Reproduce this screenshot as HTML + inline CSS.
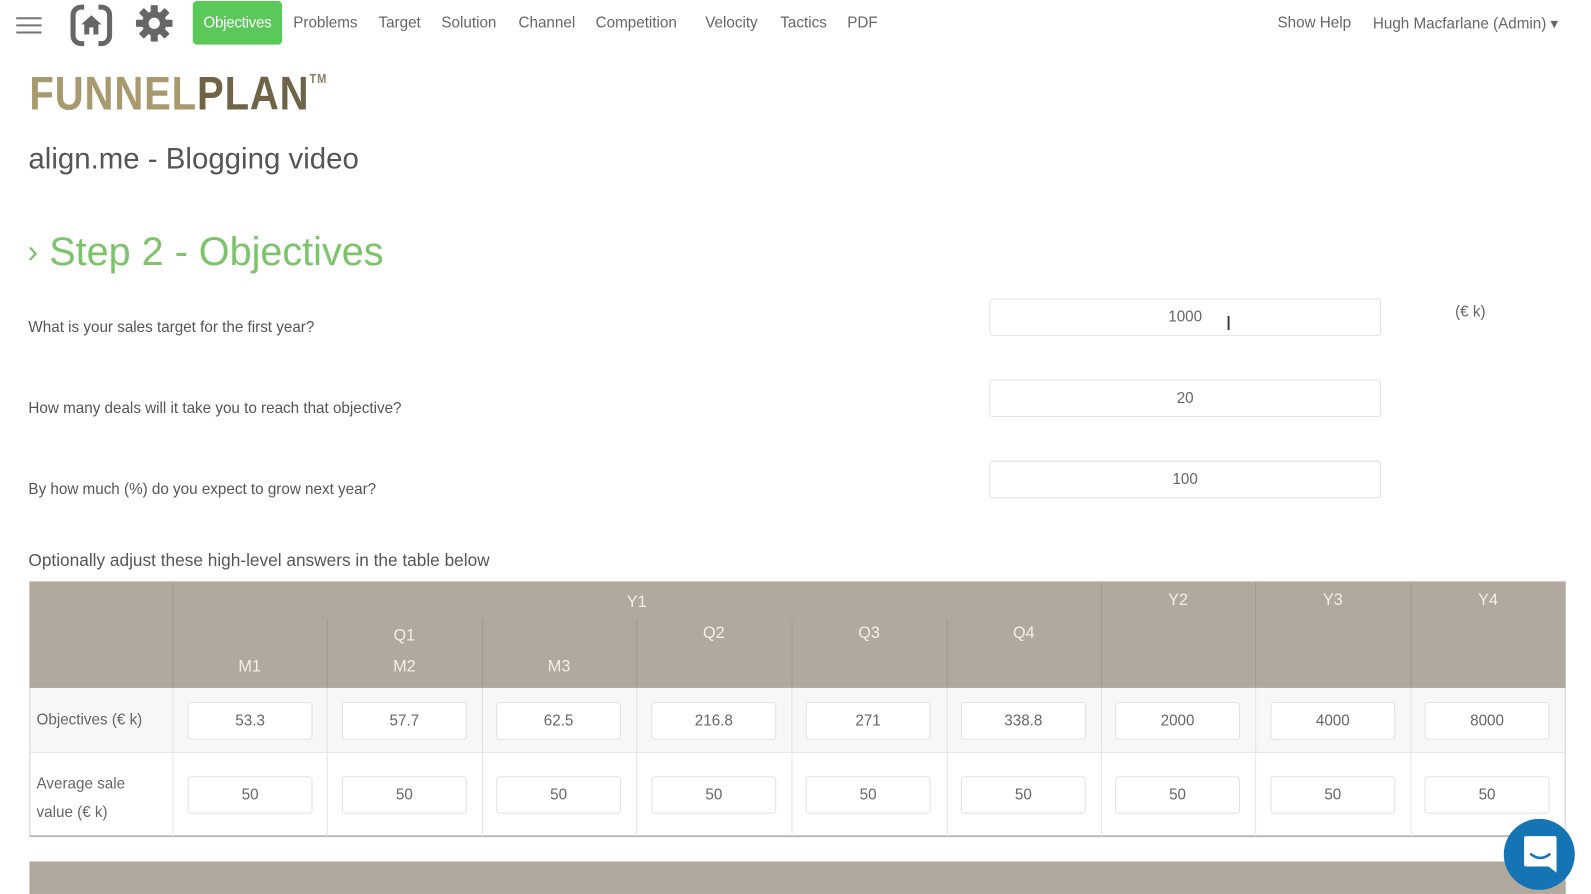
<!DOCTYPE html>
<html><head><meta charset="utf-8"><style>
*{margin:0;padding:0;box-sizing:border-box}
body{width:1591px;height:881px;overflow:hidden;background:#fff;font-family:"Liberation Sans",sans-serif;color:#555;position:relative}
#w{position:absolute;left:0;top:0;width:1568px;height:869px;transform:scale(1.0147);transform-origin:0 0}
.a{position:absolute;white-space:nowrap}
.nav{font-size:15px;color:#666;top:14px}
.inp{position:absolute;border:1px solid #e2e2e2;border-radius:3px;background:#fff;text-align:center;font-size:15px;color:#666}
.h{position:absolute;color:#f3efe6;font-size:16px;text-align:center}
.v{position:absolute;width:1px;background:#a39a8d}
.vr{position:absolute;width:1px;background:#e3e3e3}
</style></head><body><div id="w">
<div class="a" style="left:16px;top:17px;width:25px;height:2px;background:#777;box-shadow:0 7px 0 #777,0 14px 0 #777"></div>
<svg class="a" style="left:69px;top:4px" width="42" height="42" viewBox="0 0 42 42"><rect x="3" y="3" width="36" height="36" rx="8" fill="none" stroke="#666" stroke-width="5"/><rect x="14" y="0" width="14" height="6" fill="#fff"/><rect x="14" y="36" width="14" height="6" fill="#fff"/><path d="M21 11 L11 20 H14 V30 H28 V20 H31 Z" fill="#666"/><rect x="19" y="23" width="4" height="7" fill="#fff"/></svg>
<svg class="a" style="left:133px;top:4px" width="38" height="38" viewBox="0 0 38 38"><g fill="#666"><circle cx="19" cy="19" r="12"/><g id="t"><rect x="15.5" y="1" width="7" height="36" rx="1"/></g><use href="#t" transform="rotate(45 19 19)"/><use href="#t" transform="rotate(90 19 19)"/><use href="#t" transform="rotate(135 19 19)"/></g><circle cx="19" cy="19" r="5.5" fill="#fff"/></svg>
<div class="a" style="left:190px;top:1px;width:88px;height:43px;background:#5bc85a;border-radius:4px;color:#fff;font-size:15px;line-height:43px;text-align:center;letter-spacing:-0.3px">Objectives</div>
<div class="a nav" style="left:289px">Problems</div>
<div class="a nav" style="left:373px">Target</div>
<div class="a nav" style="left:435px">Solution</div>
<div class="a nav" style="left:511px">Channel</div>
<div class="a nav" style="left:587px">Competition</div>
<div class="a nav" style="left:695px">Velocity</div>
<div class="a nav" style="left:769px">Tactics</div>
<div class="a nav" style="left:835px">PDF</div>
<div class="a nav" style="left:1259px">Show Help</div>
<div class="a nav" style="left:1353px">Hugh Macfarlane (Admin) ▾</div>
<div class="a" style="left:29px;top:64px;font-size:47px;font-weight:bold;letter-spacing:1px;color:#a89a6e;transform:scaleX(0.84);transform-origin:left">FUNNEL<span style="color:#706448">PLAN</span><sup style="font-size:13px;vertical-align:top;position:relative;top:6px;color:#8a7f62">TM</sup></div>
<div class="a" style="left:28px;top:141px;font-size:29px;color:#555">align.me - Blogging video</div>
<div class="a" style="left:27px;top:227px;font-size:39px;color:#7cc46a"><span style="font-size:32px;position:relative;top:-3px">&#x203A;</span> Step 2 - Objectives</div>
<div class="a" style="left:28px;top:314px;font-size:15px">What is your sales target for the first year?</div>
<div class="a" style="left:28px;top:394px;font-size:15px">How many deals will it take you to reach that objective?</div>
<div class="a" style="left:28px;top:474px;font-size:15px">By how much (%) do you expect to grow next year?</div>
<div class="inp" style="left:975px;top:294px;width:386px;height:37px;line-height:35px">1000</div>
<div class="inp" style="left:975px;top:374px;width:386px;height:37px;line-height:35px">20</div>
<div class="inp" style="left:975px;top:454px;width:386px;height:37px;line-height:35px">100</div>
<div class="a" style="left:1208px;top:308px;font-size:20px;color:#333">I</div>
<div class="a" style="left:1434px;top:299px;font-size:15px;color:#666">(€ k)</div>
<div class="a" style="left:28px;top:543px;font-size:17px">Optionally adjust these high-level answers in the table below</div>
<div class="a" style="left:29px;top:573px;width:1514px;height:252px;border:1px solid #ccc;border-top:none"></div>
<div class="a" style="left:29px;top:573px;width:1514px;height:105px;background:#b1a99d"></div>
<div class="a" style="left:30px;top:678px;width:1512px;height:64px;background:#f7f7f7;border-bottom:1px solid #e3e3e3"></div>
<div class="a" style="left:29px;top:823px;width:1514px;height:2px;background:#bbb"></div>
<div class="v" style="left:170px;top:573px;height:105px"></div>
<div class="v" style="left:322px;top:610px;height:68px"></div>
<div class="v" style="left:475px;top:610px;height:68px"></div>
<div class="v" style="left:627px;top:610px;height:68px"></div>
<div class="v" style="left:780px;top:610px;height:68px"></div>
<div class="v" style="left:933px;top:610px;height:68px"></div>
<div class="v" style="left:1085px;top:573px;height:105px"></div>
<div class="v" style="left:1237px;top:573px;height:105px"></div>
<div class="v" style="left:1390px;top:573px;height:105px"></div>
<div class="vr" style="left:170px;top:678px;height:146px"></div>
<div class="vr" style="left:322px;top:678px;height:146px"></div>
<div class="vr" style="left:475px;top:678px;height:146px"></div>
<div class="vr" style="left:627px;top:678px;height:146px"></div>
<div class="vr" style="left:780px;top:678px;height:146px"></div>
<div class="vr" style="left:933px;top:678px;height:146px"></div>
<div class="vr" style="left:1085px;top:678px;height:146px"></div>
<div class="vr" style="left:1237px;top:678px;height:146px"></div>
<div class="vr" style="left:1390px;top:678px;height:146px"></div>
<div class="h" style="left:170px;width:915px;top:585px">Y1</div>
<div class="h" style="left:170px;width:457px;top:618px">Q1</div>
<div class="h" style="left:170px;width:152px;top:649px">M1</div>
<div class="h" style="left:322px;width:153px;top:649px">M2</div>
<div class="h" style="left:475px;width:152px;top:649px">M3</div>
<div class="h" style="left:627px;width:153px;top:616px">Q2</div>
<div class="h" style="left:780px;width:153px;top:616px">Q3</div>
<div class="h" style="left:933px;width:152px;top:616px">Q4</div>
<div class="h" style="left:1085px;width:152px;top:583px">Y2</div>
<div class="h" style="left:1237px;width:153px;top:583px">Y3</div>
<div class="h" style="left:1390px;width:153px;top:583px">Y4</div>
<div class="a" style="left:36px;top:701px;font-size:15px;color:#666">Objectives (€ k)</div>
<div class="a" style="left:36px;top:759px;font-size:15px;color:#666;line-height:28px;white-space:normal;width:120px">Average sale value (€ k)</div>
<div class="inp" style="left:185px;top:692px;width:123px;height:37px;line-height:36px">53.3</div>
<div class="inp" style="left:337px;top:692px;width:123px;height:37px;line-height:36px">57.7</div>
<div class="inp" style="left:489px;top:692px;width:123px;height:37px;line-height:36px">62.5</div>
<div class="inp" style="left:642px;top:692px;width:123px;height:37px;line-height:36px">216.8</div>
<div class="inp" style="left:794px;top:692px;width:123px;height:37px;line-height:36px">271</div>
<div class="inp" style="left:947px;top:692px;width:123px;height:37px;line-height:36px">338.8</div>
<div class="inp" style="left:1099px;top:692px;width:123px;height:37px;line-height:36px">2000</div>
<div class="inp" style="left:1252px;top:692px;width:123px;height:37px;line-height:36px">4000</div>
<div class="inp" style="left:1404px;top:692px;width:123px;height:37px;line-height:36px">8000</div>
<div class="inp" style="left:185px;top:765px;width:123px;height:37px;line-height:36px">50</div>
<div class="inp" style="left:337px;top:765px;width:123px;height:37px;line-height:36px">50</div>
<div class="inp" style="left:489px;top:765px;width:123px;height:37px;line-height:36px">50</div>
<div class="inp" style="left:642px;top:765px;width:123px;height:37px;line-height:36px">50</div>
<div class="inp" style="left:794px;top:765px;width:123px;height:37px;line-height:36px">50</div>
<div class="inp" style="left:947px;top:765px;width:123px;height:37px;line-height:36px">50</div>
<div class="inp" style="left:1099px;top:765px;width:123px;height:37px;line-height:36px">50</div>
<div class="inp" style="left:1252px;top:765px;width:123px;height:37px;line-height:36px">50</div>
<div class="inp" style="left:1404px;top:765px;width:123px;height:37px;line-height:36px">50</div>
<div class="a" style="left:29px;top:849px;width:1514px;height:32px;background:#b1a99d"></div>
<div class="a" style="left:1482px;top:807px;width:70px;height:70px;border-radius:50%;background:#1574b3"></div>
<svg class="a" style="left:1500px;top:822px" width="36" height="40" viewBox="0 0 36 40"><path d="M4 2 H32 Q34 2 34 4 V38 L26 32 H4 Q2 32 2 30 V4 Q2 2 4 2 Z" fill="#fff"/><path d="M9 20 Q18 27 27 20" stroke="#1574b3" stroke-width="2.5" fill="none" stroke-linecap="round"/></svg>
</div></body></html>
